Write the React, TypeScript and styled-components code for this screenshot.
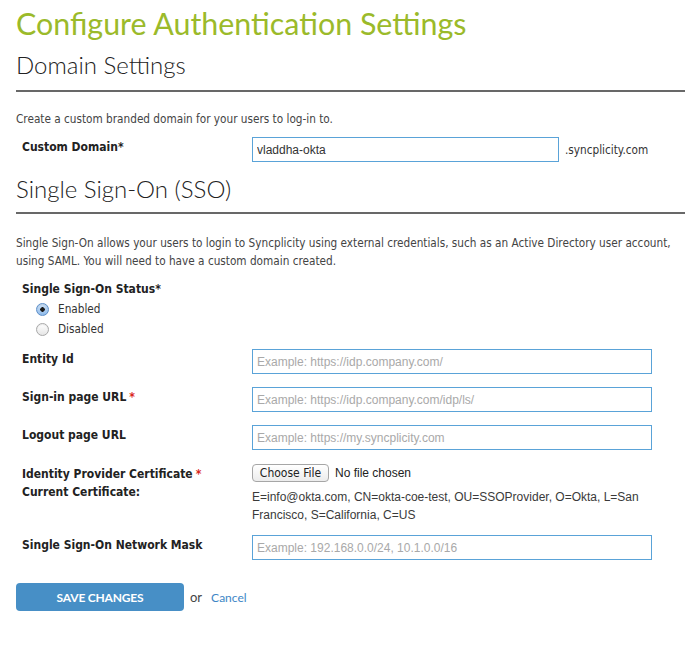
import React from "react";
import styled, { createGlobalStyle } from "styled-components";

const GlobalStyle = createGlobalStyle`
  body {
    margin: 0;
    background: #fff;
    color: #333;
  }
`;

const Page = styled.div`
  padding: 5px 10px 30px 16px;
`;

const Title = styled.h1`
  margin: 0 0 8px;
  font-family: Lato, sans-serif;
  font-weight: 400;
  font-size: 30.4px;
  line-height: 36px;
  color: #9bba2a;
`;

const SectionHeading = styled.h2<{ $top?: number; $pad?: number }>`
  margin: ${(p) => p.$top ?? 0}px 0 0;
  padding-bottom: ${(p) => p.$pad ?? 9}px;
  border-bottom: 2px solid #686868;
  font-family: Lato, sans-serif;
  font-weight: 300;
  font-size: 24px;
  line-height: 32px;
  color: #222;
`;

const Intro = styled.p<{ $top?: number }>`
  margin: ${(p) => p.$top ?? 18}px 0 0;
  font-family: "DejaVu Sans Condensed", "DejaVu Sans", sans-serif;
  font-size: 11.7px;
  line-height: 18px;
  color: #444;
`;

const Row = styled.div<{ $top?: number }>`
  display: grid;
  grid-template-columns: 230px 1fr;
  align-items: start;
  margin-top: ${(p) => p.$top ?? 13}px;
  padding-left: 6px;
`;

const Label = styled.label`
  padding-top: 2px;
  font-family: "DejaVu Sans Condensed", "DejaVu Sans", sans-serif;
  font-weight: 700;
  font-size: 12px;
  line-height: 16px;
  color: #222;
`;

const Required = styled.span`
  color: #d9261c;
  margin-left: 3px;
`;

const Field = styled.div`
  display: flex;
  align-items: center;
  gap: 6px;
`;

const TextInput = styled.input<{ $width: number }>`
  box-sizing: border-box;
  width: ${(p) => p.$width}px;
  height: 25px;
  padding: 0 4px;
  border: 1px solid #5aa3d8;
  outline: none;
  font-family: "Liberation Sans", Arial, sans-serif;
  font-size: 12px;
  color: #333;
  &::placeholder {
    color: #a9a9a9;
  }
`;

const Suffix = styled.span`
  font-family: "DejaVu Sans Condensed", "DejaVu Sans", sans-serif;
  font-size: 11.7px;
  color: #333;
`;

const StatusBlock = styled.div`
  margin-top: 9px;
  padding-left: 6px;
`;

const RadioList = styled.div`
  display: flex;
  flex-direction: column;
  gap: 4px;
  margin-top: 4px;
  padding-left: 14px;
`;

const RadioOption = styled.label`
  display: flex;
  align-items: center;
  gap: 9px;
  font-family: "DejaVu Sans Condensed", "DejaVu Sans", sans-serif;
  font-size: 11.7px;
  line-height: 16px;
  color: #333;
`;

const RadioDot = styled.span<{ $checked?: boolean }>`
  box-sizing: border-box;
  width: 13px;
  height: 13px;
  border-radius: 50%;
  border: 1px solid ${(p) => (p.$checked ? "#5d8fc9" : "#a8a8a8")};
  background: ${(p) =>
    p.$checked
      ? "radial-gradient(circle, #1a1a1a 0 2px, transparent 2.5px), linear-gradient(#cfe2f7, #8fbbea)"
      : "linear-gradient(#ffffff, #e6e6e6)"};
  box-shadow: inset 0 1px 1px rgba(0, 0, 0, 0.08);
`;

const CertColumn = styled.div`
  display: flex;
  flex-direction: column;
  gap: 6px;
`;

const FileLine = styled.div`
  display: flex;
  align-items: center;
  gap: 6px;
  font-family: "Liberation Sans", Arial, sans-serif;
  font-size: 12px;
  color: #222;
`;

const FileButton = styled.button`
  width: 77px;
  height: 18px;
  padding: 0;
  border: 1px solid #a6a6a6;
  border-radius: 4px;
  background: linear-gradient(#ffffff, #ececec);
  font-family: "DejaVu Sans Condensed", "DejaVu Sans", sans-serif;
  font-size: 12px;
  color: #222;
`;

const CertText = styled.div`
  width: 400px;
  font-family: "Liberation Sans", Arial, sans-serif;
  font-size: 12px;
  line-height: 18px;
  color: #3a3a3a;
`;

const Actions = styled.div`
  display: flex;
  align-items: center;
  gap: 6px;
  margin-top: 23px;
  font-family: Lato, sans-serif;
  font-size: 13px;
  color: #444;
`;

const SaveButton = styled.button`
  width: 168px;
  height: 28px;
  border: none;
  border-radius: 4px;
  background: #478fc6;
  color: #fff;
  font-family: Lato, sans-serif;
  font-weight: 700;
  font-size: 12px;
  text-transform: uppercase;
  letter-spacing: -0.2px;
`;

const CancelLink = styled.a`
  color: #3d86c6;
  font-size: 12px;
  text-decoration: none;
  margin-left: 3px;
`;

export default function App() {
  return (
    <Page>
      <GlobalStyle />
      <Title>Configure Authentication Settings</Title>
      <SectionHeading>Domain Settings</SectionHeading>
      <Intro>Create a custom branded domain for your users to log-in to.</Intro>
      <Row $top={9}>
        <Label>Custom Domain*</Label>
        <Field>
          <TextInput $width={307} defaultValue="vladdha-okta" />
          <Suffix>.syncplicity.com</Suffix>
        </Field>
      </Row>

      <SectionHeading $top={11} $pad={7}>
        Single Sign-On (SSO)
      </SectionHeading>
      <Intro $top={20}>
        Single Sign-On allows your users to login to Syncplicity using external credentials, such as an
        Active Directory user account, using SAML. You will need to have a custom domain created.
      </Intro>

      <StatusBlock>
        <Label>Single Sign-On Status*</Label>
        <RadioList>
          <RadioOption>
            <RadioDot $checked />
            Enabled
          </RadioOption>
          <RadioOption>
            <RadioDot />
            Disabled
          </RadioOption>
        </RadioList>
      </StatusBlock>

      <Row $top={12}>
        <Label>Entity Id</Label>
        <TextInput $width={400} placeholder="Example: https://idp.company.com/" />
      </Row>
      <Row>
        <Label>
          Sign-in page URL<Required>*</Required>
        </Label>
        <TextInput $width={400} placeholder="Example: https://idp.company.com/idp/ls/" />
      </Row>
      <Row>
        <Label>Logout page URL</Label>
        <TextInput $width={400} placeholder="Example: https://my.syncplicity.com" />
      </Row>
      <Row $top={14}>
        <div>
          <Label>
            Identity Provider Certificate<Required>*</Required>
          </Label>
          <br />
          <Label>Current Certificate:</Label>
        </div>
        <CertColumn>
          <FileLine>
            <FileButton type="button">Choose File</FileButton>
            No file chosen
          </FileLine>
          <CertText>
            E=info@okta.com, CN=okta-coe-test, OU=SSOProvider, O=Okta, L=San Francisco,
            S=California, C=US
          </CertText>
        </CertColumn>
      </Row>
      <Row $top={11}>
        <Label>Single Sign-On Network Mask</Label>
        <TextInput $width={400} placeholder="Example: 192.168.0.0/24, 10.1.0.0/16" />
      </Row>

      <Actions>
        <SaveButton type="button">Save Changes</SaveButton>
        or
        <CancelLink href="#">Cancel</CancelLink>
      </Actions>
    </Page>
  );
}
